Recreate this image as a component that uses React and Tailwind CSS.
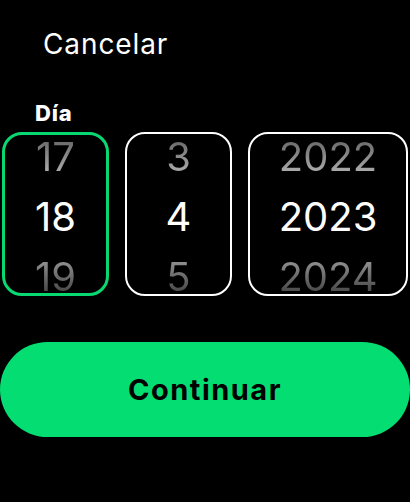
export default function App() {
  const cols = [
    { values: ["17", "18", "19"], w: "w-[107px]", border: "border-[3px] border-[#08d872]" },
    { values: ["3", "4", "5"], w: "w-[107px]", border: "border-2 border-white" },
    { values: ["2022", "2023", "2024"], w: "w-[160px]", border: "border-2 border-white" },
  ];

  return (
    <div className="w-[410px] h-[502px] bg-black text-white overflow-hidden font-['Inter',sans-serif]">
      <div className="pt-[26px] pl-[43px] text-[28px] leading-[36px] tracking-[0.9px]">Cancelar</div>
      <div className="mt-[39px] pl-[35px] text-[22px] leading-[24px] font-extrabold tracking-[0.8px]">Día</div>
      <div className="mt-[7px] pl-[2px] flex gap-[16px]">
        {cols.map((c, i) => (
          <div
            key={i}
            className={`${c.w} h-[164px] pt-[5px] rounded-[20px] ${c.border} flex flex-col items-center justify-center overflow-hidden`}
          >
            <div className="h-[60px] shrink-0 flex items-center text-[40px] bg-gradient-to-b from-[#505050] to-[#cccccc] bg-clip-text text-transparent">
              {c.values[0]}
            </div>
            <div className="h-[60px] shrink-0 flex items-center text-[40px] text-white">{c.values[1]}</div>
            <div className="h-[60px] shrink-0 flex items-center text-[40px] bg-gradient-to-b from-[#b4b4b4] to-[#2a2a2a] bg-clip-text text-transparent">
              {c.values[2]}
            </div>
          </div>
        ))}
      </div>
      <button className="mt-[46px] w-[410px] h-[95px] rounded-full bg-[#04dd72] text-black text-[29px] font-bold tracking-[1.5px]">
        Continuar
      </button>
    </div>
  );
}
